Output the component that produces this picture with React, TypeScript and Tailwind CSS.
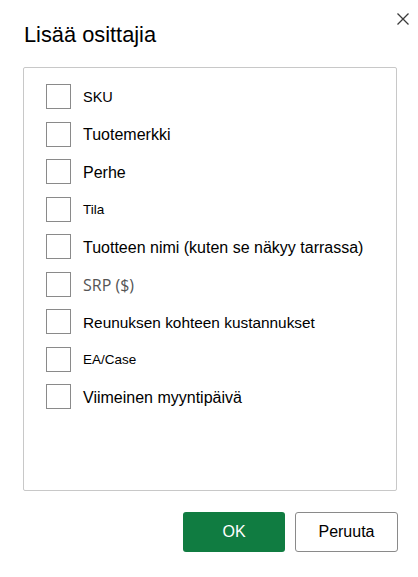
import React, { useState } from 'react';

type Field = {
  label: string;
  cls: string;
};

// label sizes differ in the original, kept as they appear
const fields: Field[] = [
  { label: 'SKU', cls: 'text-[14.5px]' },
  { label: 'Tuotemerkki', cls: 'text-[16px]' },
  { label: 'Perhe', cls: 'text-[16px]' },
  { label: 'Tila', cls: 'text-[13.5px]' },
  { label: 'Tuotteen nimi (kuten se näkyy tarrassa)', cls: 'text-[16px]' },
  { label: 'SRP ($)', cls: "text-[16px] text-[#555555] font-['Open_Sans',sans-serif]" },
  { label: 'Reunuksen kohteen kustannukset', cls: 'text-[15.4px]' },
  { label: 'EA/Case', cls: 'text-[13.5px]' },
  { label: 'Viimeinen myyntipäivä', cls: 'text-[16px]' },
];

export default function App() {
  const [checked, setChecked] = useState<Record<string, boolean>>({});

  const toggle = (label: string) => {
    setChecked((prev) => ({ ...prev, [label]: !prev[label] }));
  };

  return (
    <div className="relative w-[418px] h-[577px] bg-white text-black font-['Liberation_Sans',Arial,sans-serif] overflow-hidden">
      <button
        type="button"
        aria-label="Sulje"
        className="absolute left-[397px] top-[13px] w-[12px] h-[12px] flex items-center justify-center"
      >
        <svg width="12" height="12" viewBox="0 0 12 12">
          <path d="M0.5 0.5 L11.5 11.5 M11.5 0.5 L0.5 11.5" stroke="#3b3b3b" strokeWidth="1.3" />
        </svg>
      </button>

      <div className="flex flex-col pl-[24px] pr-[20px] pt-[24px]">
        <h2 className="text-[21.8px] leading-none">Lisää osittajia</h2>

        <div className="mt-[21.2px] ml-[-1px] w-[374px] h-[424px] border border-[#c8c8c8] rounded-[2px] pl-[22px] pt-[10px]">
          {fields.map((f) => (
            <label
              key={f.label}
              className="flex items-center h-[37.5px] gap-[12px] cursor-pointer select-none"
              onClick={() => toggle(f.label)}
            >
              <span className="w-[25px] h-[25px] border border-[#8a8a8a] bg-white flex items-center justify-center shrink-0">
                {checked[f.label] && (
                  <svg width="16" height="16" viewBox="0 0 16 16">
                    <path d="M3 8.5 L6.5 12 L13 4.5" fill="none" stroke="#107c41" strokeWidth="1.6" />
                  </svg>
                )}
              </span>
              <span className={`${f.cls} leading-none pt-[2px] whitespace-nowrap`}>{f.label}</span>
            </label>
          ))}
        </div>

        <div className="flex justify-end gap-[10px] mt-[21px]">
          <button
            type="button"
            className="w-[102px] h-[40px] bg-[#107c41] rounded-[3px] text-white text-[16px]"
          >
            OK
          </button>
          <button
            type="button"
            className="w-[103px] h-[40px] bg-white border border-[#8a8a8a] rounded-[3px] text-black text-[16px]"
          >
            Peruuta
          </button>
        </div>
      </div>
    </div>
  );
}
